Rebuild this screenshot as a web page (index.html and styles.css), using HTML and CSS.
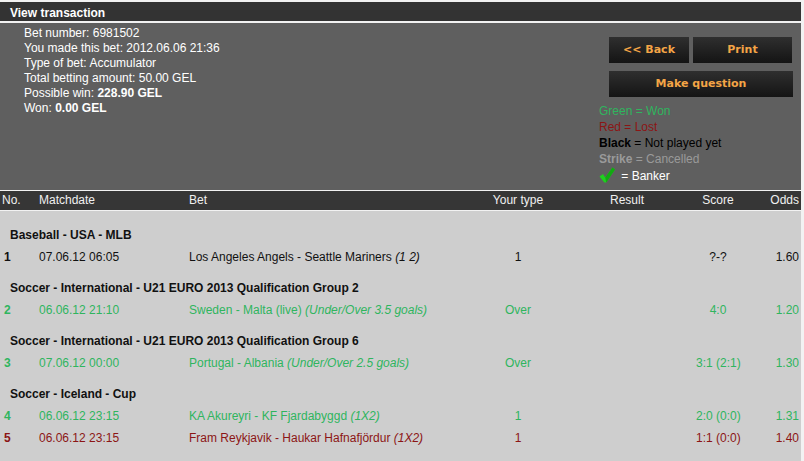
FILE: index.html
```html
<!DOCTYPE html>
<html lang="en">
<head>
    <meta charset="UTF-8">
    <title>View transaction</title>
    <link rel="stylesheet" href="styles.css">
</head>
<body>
<div class="page">
    <div class="title-bar">View transaction</div>

    <div class="panel">
        <div class="info">
            <div>Bet number: 6981502</div>
            <div>You made this bet: 2012.06.06 21:36</div>
            <div>Type of bet: Accumulator</div>
            <div>Total betting amount: 50.00 GEL</div>
            <div>Possible win: <b>228.90 GEL</b></div>
            <div>Won: <b>0.00 GEL</b></div>
        </div>

        <div class="side">
            <div class="buttons">
                <a class="btn btn-back" href="#">&lt;&lt; Back</a>
                <a class="btn btn-print" href="#">Print</a>
                <a class="btn btn-wide" href="#">Make question</a>
            </div>
            <div class="legend">
                <div class="won">Green = Won</div>
                <div class="lost">Red = Lost</div>
                <div class="pending"><b>Black</b> = Not played yet</div>
                <div class="cancelled"><b>Strike</b> = Cancelled</div>
                <div class="banker">
                    <svg width="16" height="16" viewBox="0 0 16 16">
                        <path d="M0.5 9.5 L4 7 L6.3 10.5 L13.5 0.5 L16 2.5 L7.2 15.5 L5.3 15.5 Z" fill="#1fcf1f"/>
                        <path d="M6.3 10.5 L13.5 0.5 L16 2.5 L7.2 15.5 Z" fill="#12a812"/>
                    </svg>
                    = Banker
                </div>
            </div>
        </div>
    </div>

    <div class="grid head">
        <div>No.</div>
        <div>Matchdate</div>
        <div>Bet</div>
        <div class="c">Your type</div>
        <div class="c">Result</div>
        <div class="c">Score</div>
        <div class="r">Odds</div>
    </div>

    <div class="bets">
        <div class="group">
            <div class="league">Baseball - USA - MLB</div>
            <div class="grid row pending">
                <div class="num">1</div>
                <div>07.06.12 06:05</div>
                <div>Los Angeles Angels - Seattle Mariners <i>(1 2)</i></div>
                <div class="c">1</div>
                <div class="c"></div>
                <div class="c">?-?</div>
                <div class="r">1.60</div>
            </div>
        </div>

        <div class="group">
            <div class="league">Soccer - International - U21 EURO 2013 Qualification Group 2</div>
            <div class="grid row won">
                <div class="num">2</div>
                <div>06.06.12 21:10</div>
                <div>Sweden - Malta (live) <i>(Under/Over 3.5 goals)</i></div>
                <div class="c">Over</div>
                <div class="c"></div>
                <div class="c">4:0</div>
                <div class="r">1.20</div>
            </div>
        </div>

        <div class="group">
            <div class="league">Soccer - International - U21 EURO 2013 Qualification Group 6</div>
            <div class="grid row won">
                <div class="num">3</div>
                <div>07.06.12 00:00</div>
                <div>Portugal - Albania <i>(Under/Over 2.5 goals)</i></div>
                <div class="c">Over</div>
                <div class="c"></div>
                <div class="c">3:1 (2:1)</div>
                <div class="r">1.30</div>
            </div>
        </div>

        <div class="group">
            <div class="league">Soccer - Iceland - Cup</div>
            <div class="grid row won">
                <div class="num">4</div>
                <div>06.06.12 23:15</div>
                <div>KA Akureyri - KF Fjardabyggd <i>(1X2)</i></div>
                <div class="c">1</div>
                <div class="c"></div>
                <div class="c">2:0 (0:0)</div>
                <div class="r">1.31</div>
            </div>
            <div class="grid row lost">
                <div class="num">5</div>
                <div>06.06.12 23:15</div>
                <div>Fram Reykjavik - Haukar Hafnafjördur <i>(1X2)</i></div>
                <div class="c">1</div>
                <div class="c"></div>
                <div class="c">1:1 (0:0)</div>
                <div class="r">1.40</div>
            </div>
        </div>
    </div>
</div>
</body>
</html>
```

FILE: styles.css
```css
body {
    margin: 0;
    background-color: #f2f2f2;
    font-family: "Liberation Sans", Arial, sans-serif;
    font-size: 12px;
}
.page {
    width: 801px;
    padding-top: 2px;
}
.title-bar {
    height: 18px;
    line-height: 20px;
    padding-top: 1px;
    background-color: #333333;
    color: #ffffff;
    font-weight: bold;
    padding-left: 10px;
    border-bottom: 2px solid #f2f2f2;
}
.panel {
    display: flex;
    justify-content: space-between;
    background-color: #5f5f5f;
    color: #ffffff;
    height: 167px;
    border-bottom: 1px solid #f2f2f2;
}
.info {
    padding: 3px 0 0 24px;
    line-height: 15px;
}
.side {
    width: 202px;
    padding-top: 14px;
}
.buttons {
    display: grid;
    grid-template-columns: 80px 99px;
    gap: 8px 4px;
    padding-left: 10px;
}
.btn {
    display: block;
    height: 26px;
    line-height: 26px;
    text-align: center;
    text-decoration: none;
    font-family: "DejaVu Sans", Verdana, sans-serif;
    font-size: 11px;
    font-weight: bold;
    color: #f4a546;
    background: linear-gradient(#2f2f2f, #141414);
}
.btn-wide {
    grid-column: 1 / 3;
    margin-right: -1px;
}
.legend {
    margin-top: 6px;
    line-height: 16px;
}
.legend .pending { color: #000000; }
.legend .cancelled { color: #9a9a9a; }
.legend .banker svg {
    vertical-align: -3px;
    margin-right: 3px;
}
.won { color: #2fb55e; }
.lost { color: #8c1515; }
.pending { color: #111111; }
.grid {
    display: grid;
    grid-template-columns: 37px 150px 289px 84px 134px 48px 59px;
}
.grid > div {
    padding: 0 2px;
    white-space: nowrap;
}
.grid .c { text-align: center; }
.grid .r { text-align: right; }
.head {
    height: 19px;
    line-height: 19px;
    background-color: #363636;
    color: #f0f0f0;
    border-bottom: 1px solid #f2f2f2;
}
.bets {
    background-color: #cecece;
    padding-top: 4px;
    height: 246px;
}
.group {
    margin-top: 9px;
}
.league {
    line-height: 22px;
    font-weight: bold;
    color: #111111;
    padding-left: 10px;
}
.row {
    line-height: 22px;
}
.row .num {
    font-weight: bold;
    padding-left: 4px;
}
```
